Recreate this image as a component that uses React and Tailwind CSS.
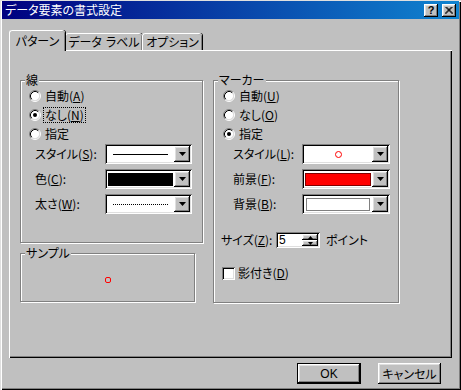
import React from 'react';

const raised =
  'shadow-[inset_-1px_-1px_0_#000,inset_1px_1px_0_#fff,inset_-2px_-2px_0_#808080,inset_2px_2px_0_#dfdfdf]';
const sunken =
  'shadow-[inset_1px_1px_0_#808080,inset_-1px_-1px_0_#fff,inset_2px_2px_0_#000,inset_-2px_-2px_0_#dfdfdf]';

const Key = ({ k }) => (
  <>
    (<span className="underline">{k}</span>)
  </>
);

const Radio = ({ checked, children, focus }) => (
  <div className="flex items-center h-[19px] gap-[3px]">
    <svg width="12" height="12" viewBox="0 0 12 12" className="shrink-0">
      <circle cx="6" cy="6" r="4.5" fill="#fff" />
      <path d="M2.11 9.89 A5.5 5.5 0 0 1 9.89 2.11" stroke="#808080" fill="none" />
      <path d="M9.89 2.11 A5.5 5.5 0 0 1 2.11 9.89" stroke="#fff" fill="none" />
      <path d="M2.82 9.18 A4.5 4.5 0 0 1 9.18 2.82" stroke="#000" fill="none" />
      <path d="M9.18 2.82 A4.5 4.5 0 0 1 2.82 9.18" stroke="#dfdfdf" fill="none" />
      {checked && <circle cx="6" cy="6" r="2" fill="#000" />}
    </svg>
    <span
      className={
        focus
          ? 'outline-1 outline-dotted outline-black px-[1px] leading-[14px]'
          : 'px-[1px] leading-[14px]'
      }
    >
      {children}
    </span>
  </div>
);

const Arrow = () => (
  <div className={`w-[16px] h-full bg-[#c0c0c0] flex items-center justify-center shrink-0 ${raised}`}>
    <svg width="7" height="4" viewBox="0 0 7 4">
      <polygon points="0,0 7,0 3.5,4" fill="#000" />
    </svg>
  </div>
);

const Combo = ({ width, children }) => (
  <div className={`${width} h-[20px] bg-white p-[2px] flex ${sunken}`}>
    <div className="flex-1 flex items-center">{children}</div>
    <Arrow />
  </div>
);

const Group = ({ title, className, children }) => (
  <div
    className={`relative border border-[#808080] shadow-[inset_1px_1px_0_#fff,1px_1px_0_#fff] ${className}`}
  >
    <span className="absolute -top-[7px] left-[4px] px-[1px] bg-[#c0c0c0] leading-[12px]">{title}</span>
    {children}
  </div>
);

const Tab = ({ children, active, width }) => (
  <div
    className={`${width} flex items-center justify-center bg-[#c0c0c0] border-t border-l border-white rounded-t-[3px] shadow-[inset_-1px_0_0_#808080,1px_0_0_#000] ${
      active ? 'h-[21px] -mb-px relative z-10' : 'h-[17px]'
    }`}
  >
    <span className="leading-[14px]">{children}</span>
  </div>
);

const Button = ({ children, width, primary }) => (
  <div
    className={`${width} h-[21px] flex items-center justify-center bg-[#c0c0c0] ${
      primary ? 'border border-black' : ''
    } ${raised}`}
  >
    {children}
  </div>
);

export default function App() {
  return (
    <div
      className={`w-[461px] h-[390px] bg-[#c0c0c0] overflow-hidden flex flex-col px-[2px] pt-[1px] text-[12px] text-black font-['Noto_Sans_CJK_JP','Noto_Sans_CJK_SC',sans-serif] [font-feature-settings:'palt'] shadow-[inset_1px_1px_0_#dfdfdf,inset_2px_2px_0_#fff,inset_-1px_-1px_0_#000,inset_-2px_-2px_0_#808080]`}
    >
      {/* Title bar */}
      <div className="h-[18px] flex items-center bg-[linear-gradient(90deg,#000080,#1084d0)] shrink-0">
        <span className="pl-[3px] text-white leading-[18px] flex-1">データ要素の書式設定</span>
        <div className="flex gap-[4px] mr-[3px]">
          <div className={`w-[14px] h-[13px] bg-[#c0c0c0] flex items-center justify-center ${raised}`}>
            <span className="font-['Liberation_Sans',sans-serif] font-bold text-[11px] leading-[11px]">?</span>
          </div>
          <div className={`w-[14px] h-[13px] bg-[#c0c0c0] flex items-center justify-center ${raised}`}>
            <svg width="8" height="7" viewBox="0 0 8 7">
              <path d="M0.5 0 L7.5 7 M7.5 0 L0.5 7 M1.5 0 L8 6.5 M6.5 0 L0 6.5" stroke="#000" strokeWidth="1" />
            </svg>
          </div>
        </div>
      </div>

      {/* Tabs */}
      <div className="flex items-end ml-[7px] mt-[11px] h-[20px]">
        <Tab active width="w-[56px]">
          パターン
        </Tab>
        <Tab width="w-[77px]">
          データ<span className="ml-[4px]">ラベル</span>
        </Tab>
        <Tab width="w-[60px]">オプション</Tab>
      </div>

      {/* Panel */}
      <div className="ml-[7px] w-[443px] h-[308px] shrink-0 flex gap-[10px] pt-[30px] pl-[11px] shadow-[inset_1px_1px_0_#fff,inset_-1px_-1px_0_#000,inset_-2px_-2px_0_#808080]">
        <div className="w-[183px] flex flex-col gap-[10px]">
          <Group title="線" className="h-[163px]">
            <div className="pt-[5px] pl-[8px]">
              <Radio>
                自動<Key k="A" />
              </Radio>
              <Radio checked focus>
                なし<Key k="N" />
              </Radio>
              <Radio>指定</Radio>
            </div>
            <div className="mt-[1px] pl-[14px] flex flex-col gap-[5px]">
              <div className="flex items-center">
                <span className="w-[70px]">
                  スタイル<Key k="S" />:
                </span>
                <Combo width="w-[87px]">
                  <div className="flex-1 mx-[6px] h-px bg-black" />
                </Combo>
              </div>
              <div className="flex items-center">
                <span className="w-[70px]">
                  色<Key k="C" />:
                </span>
                <Combo width="w-[87px]">
                  <div className="flex-1 mx-[1px] h-[13px] bg-black" />
                </Combo>
              </div>
              <div className="flex items-center">
                <span className="w-[70px]">
                  太さ<Key k="W" />:
                </span>
                <Combo width="w-[87px]">
                  <div className="flex-1 mx-[6px] border-t border-dotted border-black" />
                </Combo>
              </div>
            </div>
          </Group>
          <Group title="サンプル" className="h-[49px] w-[175px] flex items-center justify-center pt-[5px]">
            <div className="w-[6px] h-[6px] rounded-[2px] border border-[#ff0000]" />
          </Group>
        </div>

        <Group title="マーカー" className="w-[186px] h-[223px]">
          <div className="pt-[5px] pl-[9px]">
            <Radio>
              自動<Key k="U" />
            </Radio>
            <Radio>
              なし<Key k="O" />
            </Radio>
            <Radio checked>指定</Radio>
          </div>
          <div className="mt-[1px] pl-[19px] flex flex-col gap-[5px]">
            <div className="flex items-center">
              <span className="w-[69px]">
                スタイル<Key k="L" />:
              </span>
              <Combo width="w-[88px]">
                <div className="flex-1 flex justify-center">
                  <div className="w-[7px] h-[7px] rounded-full border border-[#ff0000]" />
                </div>
              </Combo>
            </div>
            <div className="flex items-center">
              <span className="w-[69px]">
                前景<Key k="F" />:
              </span>
              <Combo width="w-[88px]">
                <div className="flex-1 mx-[1px] h-[13px] bg-[#ff0000] border border-[#800000]" />
              </Combo>
            </div>
            <div className="flex items-center">
              <span className="w-[69px]">
                背景<Key k="B" />:
              </span>
              <Combo width="w-[88px]">
                <div className="flex-1 mx-[2px] h-[13px] bg-white border border-[#808080]" />
              </Combo>
            </div>
          </div>
          <div className="mt-[18px] pl-[7px] flex items-center h-[16px]">
            <span className="w-[55px]">
              サイズ<Key k="Z" />:
            </span>
            <div className={`w-[44px] h-[16px] bg-white p-[2px] flex ${sunken}`}>
              <span className="flex-1 pl-[1px] leading-[12px] font-['Liberation_Sans',sans-serif] text-[12px]">5</span>
              <div className="w-[16px] flex flex-col">
                <div className={`flex-1 bg-[#c0c0c0] flex items-center justify-center ${raised}`}>
                  <svg width="5" height="3" viewBox="0 0 5 3">
                    <polygon points="2.5,0 5,3 0,3" fill="#000" />
                  </svg>
                </div>
                <div className={`flex-1 bg-[#c0c0c0] flex items-center justify-center ${raised}`}>
                  <svg width="5" height="3" viewBox="0 0 5 3">
                    <polygon points="0,0 5,0 2.5,3" fill="#000" />
                  </svg>
                </div>
              </div>
            </div>
            <span className="ml-[6px]">ポイント</span>
          </div>
          <div className="mt-[16px] pl-[8px] flex items-center gap-[3px]">
            <div className={`w-[13px] h-[13px] bg-white ${sunken}`} />
            <span>
              影付き<Key k="D" />
            </span>
          </div>
        </Group>
      </div>

      {/* Buttons */}
      <div className="flex justify-end gap-[17px] mt-[5px] mr-[18px]">
        <Button width="w-[64px]" primary>
          <span className="font-['Liberation_Sans',sans-serif]">OK</span>
        </Button>
        <Button width="w-[63px]">キャンセル</Button>
      </div>
    </div>
  );
}
